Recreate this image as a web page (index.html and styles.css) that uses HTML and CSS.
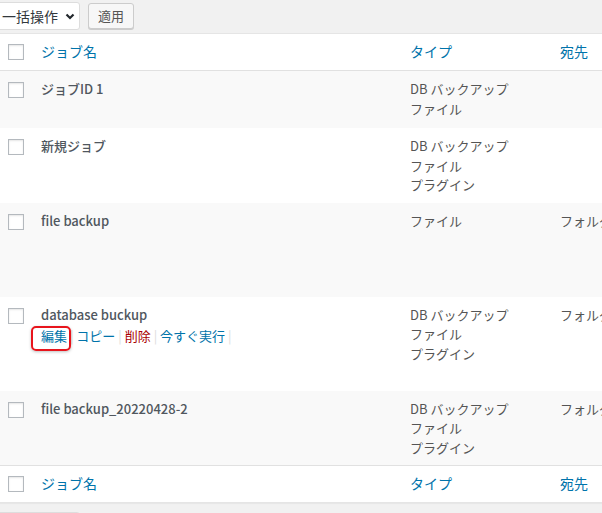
FILE: index.html
```html
<!DOCTYPE html>
<html lang="ja">
<head>
<meta charset="utf-8">
<title>ジョブ</title>
<link rel="stylesheet" href="styles.css">
</head>
<body>
<div class="wrap">
  <div class="tablenav top">
    <div class="select">一括操作<svg class="chev" width="10" height="7" viewBox="0 0 10 7"><polyline points="1.5,1.5 5,5 8.5,1.5" fill="none" stroke="#23282d" stroke-width="2.2"/></svg></div>
    <button class="button">適用</button>
  </div>
  <table class="list">
    <colgroup>
      <col class="c-check"><col class="c-name"><col class="c-type"><col class="c-dest">
    </colgroup>
    <thead>
      <tr>
        <td class="check"><span class="cb"></span></td>
        <th><a href="#">ジョブ名</a></th>
        <th><a href="#">タイプ</a></th>
        <th><a href="#">宛先</a></th>
      </tr>
    </thead>
    <tbody>
      <tr class="alt">
        <th class="check"><span class="cb"></span></th>
        <td><strong>ジョブID 1</strong><div class="row-actions"><a href="#">編集</a> | <a href="#">コピー</a> | <a class="del" href="#">削除</a> | <a href="#">今すぐ実行</a> |</div></td>
        <td>DB バックアップ<br>ファイル</td>
        <td></td>
      </tr>
      <tr>
        <th class="check"><span class="cb"></span></th>
        <td><strong>新規ジョブ</strong><div class="row-actions"><a href="#">編集</a> | <a href="#">コピー</a> | <a class="del" href="#">削除</a> | <a href="#">今すぐ実行</a> |</div></td>
        <td>DB バックアップ<br>ファイル<br>プラグイン</td>
        <td></td>
      </tr>
      <tr class="alt tall">
        <th class="check"><span class="cb"></span></th>
        <td><strong>file backup</strong><div class="row-actions"><a href="#">編集</a> | <a href="#">コピー</a> | <a class="del" href="#">削除</a> | <a href="#">今すぐ実行</a> |</div></td>
        <td>ファイル</td>
        <td>フォルダー</td>
      </tr>
      <tr class="tall">
        <th class="check"><span class="cb"></span></th>
        <td><strong>database buckup</strong><div class="row-actions show"><a class="mark" href="#">編集</a> | <a href="#">コピー</a> | <a class="del" href="#">削除</a> | <a href="#">今すぐ実行</a> |</div></td>
        <td>DB バックアップ<br>ファイル<br>プラグイン</td>
        <td>フォルダー</td>
      </tr>
      <tr class="alt">
        <th class="check"><span class="cb"></span></th>
        <td><strong>file backup_20220428-2</strong><div class="row-actions"><a href="#">編集</a> | <a href="#">コピー</a> | <a class="del" href="#">削除</a> | <a href="#">今すぐ実行</a> |</div></td>
        <td>DB バックアップ<br>ファイル<br>プラグイン</td>
        <td>フォルダー</td>
      </tr>
    </tbody>
    <tfoot>
      <tr>
        <td class="check"><span class="cb"></span></td>
        <th><a href="#">ジョブ名</a></th>
        <th><a href="#">タイプ</a></th>
        <th><a href="#">宛先</a></th>
      </tr>
    </tfoot>
  </table>
  <div class="tablenav bottom">
    <div class="select">一括操作<svg class="chev" width="10" height="7" viewBox="0 0 10 7"><polyline points="1.5,1.5 5,5 8.5,1.5" fill="none" stroke="#23282d" stroke-width="2.2"/></svg></div>
    <button class="button">適用</button>
  </div>
</div>
</body>
</html>
```

FILE: styles.css
```css
html, body {
  margin: 0;
  padding: 0;
}
body {
  background: #f1f1f1;
  overflow: hidden;
  font-family: "Noto Sans CJK JP", "Noto Sans", sans-serif;
  color: #555;
  font-size: 13px;
}
.wrap {
  margin-left: -10px;
  width: 711px;
}
.tablenav {
  display: flex;
  align-items: flex-start;
  gap: 8px;
  height: 31px;
  padding-top: 2px;
  padding-left: 2px;
}
.tablenav.bottom {
  padding-top: 9px;
}
.select {
  box-sizing: border-box;
  width: 88px;
  height: 28px;
  background: #fff;
  border: 1px solid #ddd;
  border-radius: 0 3px 3px 0;
  padding: 0 4px 0 9px;
  display: flex;
  align-items: center;
  justify-content: space-between;
  font-size: 14px;
  color: #32373c;
  line-height: 1;
}
.chev {
  display: block;
}
.button {
  box-sizing: border-box;
  margin-top: 1px;
  height: 26px;
  width: 46px;
  padding: 0;
  background: #f7f7f7;
  border: 1px solid #ccc;
  border-radius: 3px;
  box-shadow: 0 1px 0 #ccc;
  font-family: inherit;
  font-size: 13px;
  color: #555;
  line-height: 24px;
}
.list {
  table-layout: fixed;
  width: 711px;
  border-collapse: separate;
  border-spacing: 0;
  background: #fff;
  border: 1px solid #e5e5e5;
  box-shadow: 0 1px 1px rgba(0, 0, 0, 0.04);
}
.c-check { width: 40px; }
.c-name { width: 369px; }
.c-type { width: 150px; }
.c-dest { width: 150px; }
.list th, .list td {
  text-align: left;
  vertical-align: top;
  padding: 8px 10px;
  font-weight: 400;
  white-space: nowrap;
}
.list thead th, .list thead td, .list tfoot th, .list tfoot td {
  font-size: 14px;
  line-height: 20px;
}
.list thead th, .list thead td {
  border-bottom: 1px solid #e1e1e1;
}
.list tfoot th, .list tfoot td {
  border-top: 1px solid #e1e1e1;
  padding-bottom: 7px;
}
.list thead th, .list tfoot th {
  padding-top: 7px;
  padding-bottom: 9px;
}
.list thead a, .list tfoot a {
  color: #0073aa;
  text-decoration: none;
}
.list tbody td, .list tbody th {
  line-height: 19.5px;
  font-size: 13px;
}
.list .check {
  padding: 10px 0 0 17px;
}
.list tbody .check {
  padding-top: 11px;
}
.list tfoot .check {
  padding-top: 10px;
}
.cb {
  display: block;
  box-sizing: border-box;
  width: 16px;
  height: 16px;
  border: 1px solid #b4b9be;
  background: #fff;
  box-shadow: inset 0 1px 2px rgba(0, 0, 0, 0.1);
}
.alt {
  background: #f9f9f9;
}
tr.tall {
  height: 94px;
}
strong {
  font-weight: 500;
  color: #50575e;
}
.row-actions {
  padding-top: 2px;
  color: #ddd;
  visibility: hidden;
}
.row-actions.show {
  visibility: visible;
}
.row-actions a {
  color: #0073aa;
  text-decoration: none;
}
.row-actions a.del {
  color: #a00;
}
.row-actions a.mark {
  position: relative;
  display: inline-block;
}
.row-actions a.mark::after {
  content: "";
  position: absolute;
  left: -10px;
  right: -4px;
  top: 0;
  bottom: -5px;
  border: 2px solid #e8141c;
  border-radius: 5px;
  box-shadow: 0 1px 3px rgba(0, 0, 0, 0.25);
}
```
